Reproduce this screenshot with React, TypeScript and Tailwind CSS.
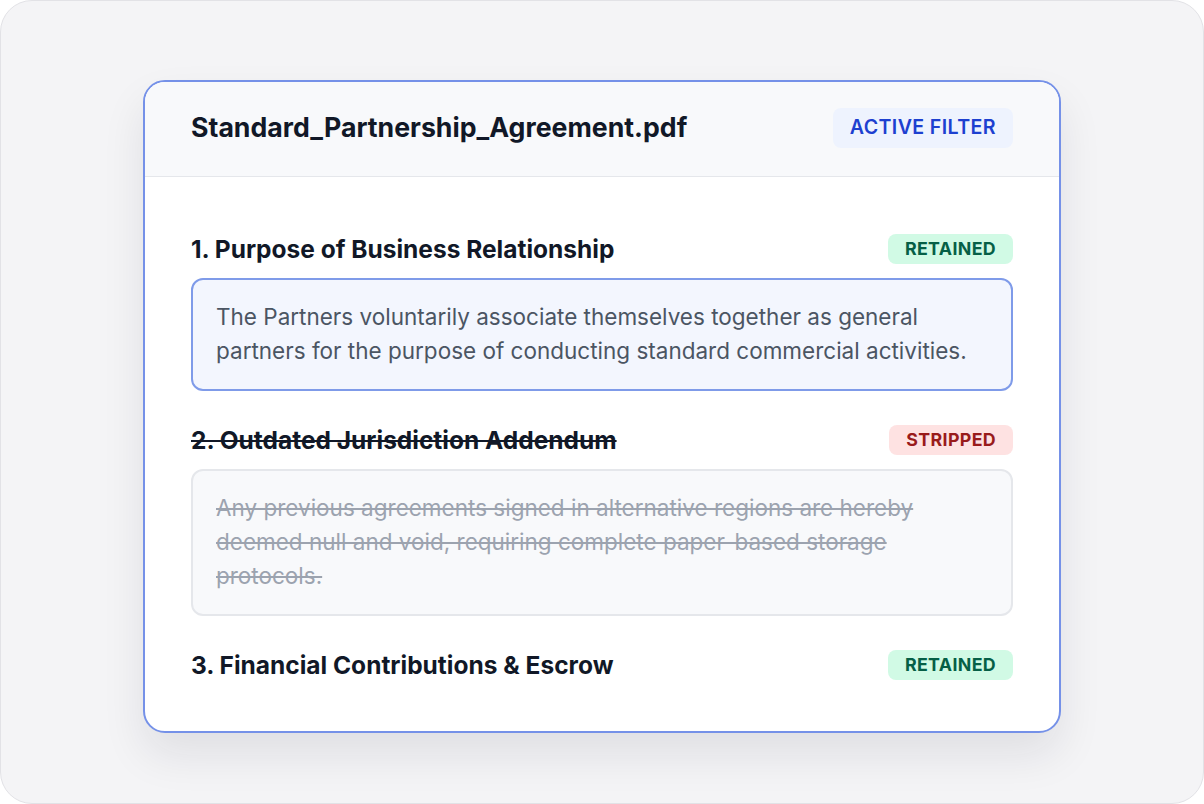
import { ReactNode } from "react";

type Status = "retained" | "stripped";

interface Clause {
    title: string;
    status: Status;
    body?: string;
}

const clauses: Clause[] = [
    {
        title: "1. Purpose of Business Relationship",
        status: "retained",
        body: "The Partners voluntarily associate themselves together as general partners for the purpose of conducting standard commercial activities.",
    },
    {
        title: "2. Outdated Jurisdiction Addendum",
        status: "stripped",
        body: "Any previous agreements signed in alternative regions are hereby deemed null and void, requiring complete paper-based storage protocols.",
    },
    {
        title: "3. Financial Contributions & Escrow",
        status: "retained",
    },
];

function StatusBadge({ status }: { status: Status }) {
    const styles =
        status === "retained"
            ? "bg-[#d1fae5] text-[#065f46]"
            : "bg-[#fee2e2] text-[#991b1b]";
    return (
        <span
            className={`${styles} inline-flex h-[30px] items-center rounded-lg px-[17px] text-[17.8px] font-bold tracking-[0.02em]`}
        >
            {status === "retained" ? "RETAINED" : "STRIPPED"}
        </span>
    );
}

function ClauseBody({ stripped, children }: { stripped: boolean; children: ReactNode }) {
    return (
        <div
            className={
                stripped
                    ? "rounded-xl border-2 border-[#e5e7eb] bg-[#f8f9fb] px-[23px] pt-[20px] pb-[21px] text-[22.5px] leading-[34px] text-[#9ca3af] line-through decoration-[#9ca3af]"
                    : "rounded-xl border-2 border-[#7f9be9] bg-[#f3f6fe] px-[23px] pt-[20px] pb-[21px] text-[22.5px] leading-[34px] text-[#4b5563]"
            }
        >
            {children}
        </div>
    );
}

export default function App() {
    return (
        <div
            className="flex h-[804px] w-[1204px] justify-center rounded-[32px] border border-[#e2e2e6] bg-[#f4f4f6] pt-[79px]"
            style={{ fontFamily: "Inter, 'Noto Sans', sans-serif" }}
        >
            <div className="h-fit w-[918px] overflow-hidden rounded-[22px] border-2 border-[#7591e8] bg-white shadow-[0_22px_44px_rgba(17,24,39,0.09)]">
                <div className="flex items-center justify-between border-b border-[#e5e7eb] bg-[#f8f9fb] px-[46px] pt-[25px] pb-[28px]">
                    <h1 className="text-[26.7px] leading-[41px] font-bold text-[#111827]">Standard_Partnership_Agreement.pdf</h1>
                    <span className="inline-flex h-[40px] items-center rounded-lg bg-[#eef3fe] px-[17px] text-[19.6px] font-semibold tracking-[0.02em] text-[#1d40d0]">
                        ACTIVE FILTER
                    </span>
                </div>

                <div className="flex flex-col gap-[34px] px-[46px] pt-[57px] pb-[51px]">
                    {clauses.map((c) => {
                        const stripped = c.status === "stripped";
                        return (
                            <div key={c.title} className="flex flex-col gap-[14px]">
                                <div className="flex items-center justify-between">
                                    <h2
                                        className={`text-[24.5px] leading-[30px] font-bold text-[#111827] ${stripped ? "line-through decoration-[#111827]" : ""}`}
                                    >
                                        {c.title}
                                    </h2>
                                    <StatusBadge status={c.status} />
                                </div>
                                {c.body && <ClauseBody stripped={stripped}>{c.body}</ClauseBody>}
                            </div>
                        );
                    })}
                </div>
            </div>
        </div>
    );
}
